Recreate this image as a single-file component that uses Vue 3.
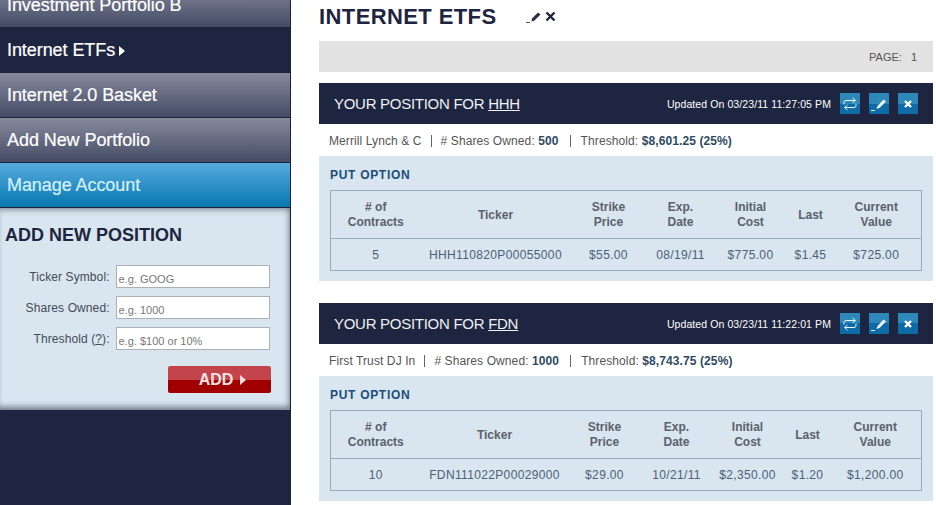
<script setup>
const navItems = [
  { label: 'Investment Portfolio B', kind: '' },
  { label: 'Internet ETFs', kind: 'current', arrow: true },
  { label: 'Internet 2.0 Basket', kind: '' },
  { label: 'Add New Portfolio', kind: '' },
  { label: 'Manage Account', kind: 'manage' },
]
const fields = [
  { label: 'Ticker Symbol:', ph: 'e.g. GOOG' },
  { label: 'Shares Owned:', ph: 'e.g. 1000' },
  { label: 'Threshold', help: true, ph: 'e.g. $100 or 10%' },
]
const heads = [['# of', 'Contracts'], ['Ticker'], ['Strike', 'Price'], ['Exp.', 'Date'], ['Initial', 'Cost'], ['Last'], ['Current', 'Value']]
const edges = [0, 90, 240, 316, 385, 450, 513, 591]
const positions = [
  {
    sym: 'HHH', updated: '03/23/11 11:27:05 PM', name: 'Merrill Lynch & C', shares: '500', threshold: '$8,601.25 (25%)',
    centers: [45, 165, 278, 350, 420, 480, 546],
    row: ['5', 'HHH110820P00055000', '$55.00', '08/19/11', '$775.00', '$1.45', '$725.00'],
  },
  {
    sym: 'FDN', updated: '03/23/11 11:22:01 PM', name: 'First Trust DJ In', shares: '1000', threshold: '$8,743.75 (25%)',
    centers: [45, 164, 274, 346, 417, 477, 545],
    row: ['10', 'FDN111022P00029000', '$29.00', '10/21/11', '$2,350.00', '$1.20', '$1,200.00'],
  },
]
function cellStyle(p, i) {
  const d = 2 * p.centers[i] - edges[i] - edges[i + 1]
  return { paddingLeft: Math.max(0, d) + 'px', paddingRight: Math.max(0, -d) + 'px' }
}
function colWidth(i) {
  return edges[i + 1] - edges[i] + 'px'
}
</script>

<template>
  <div class="page">
    <aside class="side">
      <nav class="nav">
        <a v-for="n in navItems" :key="n.label" class="nav-item" :class="n.kind">
          {{ n.label }}<svg v-if="n.arrow" class="nav-arrow" width="6" height="10" viewBox="0 0 6 10"><path d="M0 0L6 5L0 10Z" fill="#fff"/></svg>
        </a>
      </nav>
      <form class="add" @submit.prevent>
        <h2>ADD NEW POSITION</h2>
        <div v-for="f in fields" :key="f.label" class="field">
          <label>{{ f.label }}<template v-if="f.help"> (<u>?</u>):</template></label>
          <input :placeholder="f.ph" />
        </div>
        <button class="add-btn">ADD<svg width="6" height="10" viewBox="0 0 6 10"><path d="M0 0L6 5L0 10Z" fill="#f5dcdc"/></svg></button>
      </form>
    </aside>

    <main class="main">
      <div class="title-row">
        <h1>INTERNET ETFS</h1>
        <svg class="t-edit" width="16" height="12" viewBox="0 0 16 12"><path d="M0 11.5H4" stroke="#555" stroke-width="1"/><path d="M6 7.5L12 1.5L14.5 3.5L8.5 9.5L5.5 10.5Z" fill="#2a3048"/></svg>
        <svg class="t-x" width="11" height="11" viewBox="0 0 11 11"><path d="M1.5 1.5L9.5 9.5M9.5 1.5L1.5 9.5" stroke="#1e2540" stroke-width="2.4"/></svg>
      </div>
      <div class="pager"><span>PAGE:</span><span>1</span></div>

      <section v-for="p in positions" :key="p.sym" class="card">
        <header class="card-head">
          <div class="card-title">YOUR POSITION FOR <u>{{ p.sym }}</u></div>
          <div class="updated">Updated On {{ p.updated }}</div>
          <div class="btns">
            <button class="ico">
              <svg width="16" height="14" viewBox="0 0 16 14" fill="none" stroke="#e8f4fa" stroke-width="1"><path d="M2 7.5V5.5Q2 3.5 4 3.5H13"/><path d="M14 6.5V8.5Q14 10.5 12 10.5H3"/><path d="M10.5 1L13.5 3.5L10.5 6" /><path d="M5.5 8L2.5 10.5L5.5 13"/></svg>
            </button>
            <button class="ico">
              <svg width="16" height="14" viewBox="0 0 16 14"><path d="M0 13.5H4" stroke="#dcecf5"/><path d="M6.5 9L12.5 2.5L15 4.5L8.5 11L5.5 12Z" fill="#e8f4fa"/></svg>
            </button>
            <button class="ico">
              <svg width="10" height="10" viewBox="0 0 10 10"><path d="M2 2L8 8M8 2L2 8" stroke="#fff" stroke-width="2.4"/></svg>
            </button>
          </div>
        </header>
        <div class="info">
          <span>{{ p.name }}</span><i class="sep-a"></i>
          <span># Shares Owned: <b>{{ p.shares }}</b></span><i class="sep-b"></i>
          <span>Threshold: <b>{{ p.threshold }}</b></span>
        </div>
        <div class="card-body">
          <h3>PUT OPTION</h3>
          <table>
            <colgroup><col v-for="(h, i) in heads" :key="i" :style="{ width: colWidth(i) }" /></colgroup>
            <thead>
              <tr>
                <th v-for="(h, i) in heads" :key="i" :style="cellStyle(p, i)">
                  <div v-for="line in h" :key="line">{{ line }}</div>
                </th>
              </tr>
            </thead>
            <tbody>
              <tr><td v-for="(v, i) in p.row" :key="i" :style="cellStyle(p, i)">{{ v }}</td></tr>
            </tbody>
          </table>
        </div>
      </section>
    </main>
  </div>
</template>

<style>
html, body { margin: 0; overflow: hidden; background: #fff; }
</style>

<style scoped>
.page {
  width: 936px;
  height: 505px;
  overflow: hidden;
  display: flex;
  font-family: "Liberation Sans", Arial, sans-serif;
  background: #fff;
}
.side {
  width: 290px;
  flex: none;
  border-right: 1px solid #1a2036;
  background: #1e2540;
  height: 505px;
}
.nav { margin-top: -17px; display: flex; flex-direction: column; }
.nav-item {
  height: 44px;
  line-height: 44px;
  border-bottom: 1px solid #1c2338;
  padding-left: 7px;
  font-size: 18px;
  letter-spacing: -0.07px;
  -webkit-text-stroke: 0.2px currentColor;
  color: #fff;
  background: linear-gradient(#868a9d, #444b65);
  display: block;
  white-space: nowrap;
}
.nav-item.current { background: #1e2540; }
.nav-item.manage { color: #d3f1fb; background: linear-gradient(#58aade, #0678b0); }
.nav-arrow { margin-left: 4px; }
.add {
  height: 202px;
  box-sizing: border-box;
  background: #d9e5ef;
  padding: 16px 20px 0 5px;
  box-shadow: inset 0 6px 6px -5px #6c7a88, inset -6px 0 6px -5px #7a8896, inset 0 -7px 6px -4px #6c7682;
}
.add h2 {
  margin: 0 0 19px;
  font-size: 18px;
  line-height: 22px;
  font-weight: 700;
  letter-spacing: 0;
  color: #1e2540;
}
.field { display: flex; align-items: center; height: 23px; margin-bottom: 8px; }
.field label {
  width: 105px;
  text-align: right;
  font-size: 12px;
  letter-spacing: 0.1px;
  color: #444c58;
  white-space: nowrap;
}
.field input {
  margin-left: 6px;
  width: 155px;
  height: 23px;
  box-sizing: border-box;
  border: 1px solid #aab0b6;
  background: #fff;
  padding: 5px 2px 0;
  font: 11px "Liberation Sans", Arial, sans-serif;
  outline: none;
}
.field input::placeholder { color: #777; opacity: 1; }
.add-btn {
  display: flex;
  align-items: center;
  justify-content: center;
  gap: 7px;
  margin: 16px 0 0 163px;
  width: 103px;
  height: 27px;
  padding: 0 0 0 6px;
  border: 0;
  border-radius: 2px;
  background: linear-gradient(#c3454b 0 52%, #a00000 52% 100%);
  color: #f8e4e4;
  font: 700 16px "Liberation Sans", Arial, sans-serif;
}
.main { flex: 1; min-width: 0; padding: 5px 3px 0 28px; }
.title-row { display: flex; align-items: center; height: 23px; }
h1 {
  margin: 0;
  font-size: 22px;
  line-height: 23px;
  letter-spacing: 0.4px;
  color: #1e2540;
  font-weight: 700;
  white-space: nowrap;
}
.t-edit { margin-left: 29px; }
.t-x { margin-left: 3px; }
.pager {
  margin-top: 13px;
  height: 31px;
  background: #e2e2e2;
  display: flex;
  justify-content: flex-end;
  align-items: center;
  gap: 9px;
  padding-right: 16px;
  font-size: 11px;
  color: #555;
}
.card { margin-top: 11px; }
.card + .card { margin-top: 22px; }
.card-head {
  height: 41px;
  background: #1e2540;
  display: flex;
  align-items: center;
  padding: 0 15px;
  color: #fff;
}
.card-title { font-size: 15px; letter-spacing: -0.28px; font-weight: 400; color: #eef0f4; white-space: nowrap; }
.updated { margin-left: auto; font-size: 10.5px; letter-spacing: 0.09px; white-space: nowrap; }
.btns { display: flex; gap: 9px; margin-left: 9px; }
.ico {
  width: 20px;
  height: 21px;
  padding: 0;
  border: 0;
  display: flex;
  align-items: center;
  justify-content: center;
  background: linear-gradient(#2d87b9 0 50%, #0f6ba5 50% 100%);
}
.info {
  height: 32px;
  box-sizing: border-box;
  padding: 1px 0 0 10px;
  display: flex;
  align-items: center;
  font-size: 12px;
  letter-spacing: 0.1px;
  color: #555;
  white-space: nowrap;
}
.info i { width: 1px; height: 12px; background: #666; }
.info .sep-a { margin: 0 9px; }
.info .sep-b { margin: 0 10px 0 11px; }
.info b { color: #2e4a62; }
.card-body {
  height: 125px;
  box-sizing: border-box;
  background: #d9e5ef;
  padding: 11px 11px 0;
}
h3 {
  margin: 0 0 7px;
  font-size: 12px;
  line-height: 16px;
  letter-spacing: 0.7px;
  color: #1a4e78;
  font-weight: 700;
}
table {
  width: 592px;
  table-layout: fixed;
  border-collapse: collapse;
  border: 1px solid #9aabb8;
  font-size: 12px;
  color: #4c6078;
}
th {
  height: 46px;
  padding: 1px 0 0;
  border-bottom: 1px solid #9aabb8;
  font-weight: 700;
  line-height: 15px;
  letter-spacing: 0;
  color: #59626c;
  text-align: center;
}
td {
  height: 31px;
  padding: 0;
  text-align: center;
  letter-spacing: 0.35px;
  white-space: nowrap;
}
</style>
